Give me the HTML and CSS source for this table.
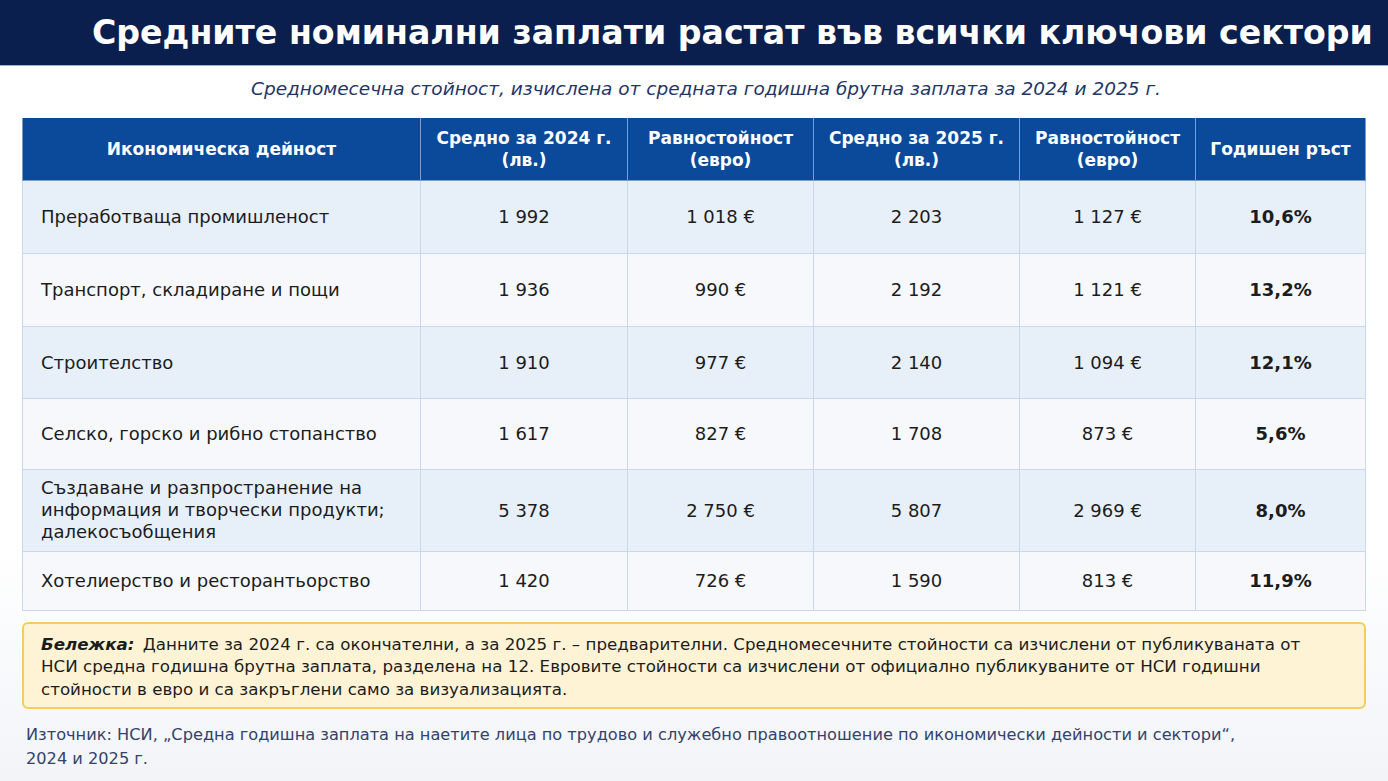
FILE: index.html
```html
<!DOCTYPE html>
<html lang="bg">
<head>
<meta charset="utf-8">
<link rel="stylesheet" href="styles.css">
</head>
<body>
<header class="top">
  <h1>Средните номинални заплати растат във всички ключови сектори</h1>
</header>
<p class="subtitle">Средномесечна стойност, изчислена от средната годишна брутна заплата за 2024 и 2025 г.</p>
<table class="data">
  <colgroup>
    <col class="c1"><col class="c2"><col class="c3"><col class="c4"><col class="c5"><col class="c6">
  </colgroup>
  <thead>
    <tr>
      <th>Икономическа дейност</th>
      <th>Средно за 2024 г.<br>(лв.)</th>
      <th>Равностойност<br>(евро)</th>
      <th>Средно за 2025 г.<br>(лв.)</th>
      <th>Равностойност<br>(евро)</th>
      <th>Годишен ръст</th>
    </tr>
  </thead>
  <tbody>
    <tr class="odd r1"><td>Преработваща промишленост</td><td>1 992</td><td>1 018 €</td><td>2 203</td><td>1 127 €</td><td class="g">10,6%</td></tr>
    <tr class="even r2"><td>Транспорт, складиране и пощи</td><td>1 936</td><td>990 €</td><td>2 192</td><td>1 121 €</td><td class="g">13,2%</td></tr>
    <tr class="odd r3"><td>Строителство</td><td>1 910</td><td>977 €</td><td>2 140</td><td>1 094 €</td><td class="g">12,1%</td></tr>
    <tr class="even r4"><td>Селско, горско и рибно стопанство</td><td>1 617</td><td>827 €</td><td>1 708</td><td>873 €</td><td class="g">5,6%</td></tr>
    <tr class="odd r5"><td class="multi">Създаване и разпространение на информация и творчески продукти; далекосъобщения</td><td>5 378</td><td>2 750 €</td><td>5 807</td><td>2 969 €</td><td class="g">8,0%</td></tr>
    <tr class="even r6"><td>Хотелиерство и ресторантьорство</td><td>1 420</td><td>726 €</td><td>1 590</td><td>813 €</td><td class="g">11,9%</td></tr>
  </tbody>
</table>
<div class="note">
  <p><span class="label">Бележка:</span> Данните за 2024 г. са окончателни, а за 2025 г. – предварителни. Средномесечните стойности са изчислени от публикуваната от НСИ средна годишна брутна заплата, разделена на 12. Евровите стойности са изчислени от официално публикуваните от НСИ годишни стойности в евро и са закръглени само за визуализацията.</p>
</div>
<p class="source">Източник: НСИ, „Средна годишна заплата на наетите лица по трудово и служебно правоотношение по икономически дейности и сектори“,<br>2024 и 2025 г.</p>
</body>
</html>
```
FILE: styles.css
```css
html, body {
  margin: 0;
  padding: 0;
}
body {
  width: 1388px;
  height: 781px;
  overflow: hidden;
  font-family: "DejaVu Sans", "Noto Sans", sans-serif;
  background: linear-gradient(to bottom, #ffffff 0%, #ffffff 70%, #f2f4f8 100%);
  color: #1c1c1c;
}
.top {
  height: 66px;
  background: #0b1f4e;
  border-bottom: 1px solid #9fb0cc;
  box-sizing: border-box;
  display: flex;
  align-items: center;
  padding-left: 92px;
}
.top h1 {
  margin: 0;
  font-size: 33.2px;
  font-weight: bold;
  color: #ffffff;
  white-space: nowrap;
}
.subtitle {
  margin: 12px 0 0 0;
  height: 30px;
  text-align: center;
  padding-left: 24px;
  font-style: italic;
  font-size: 18.5px;
  color: #1f3566;
}
.data {
  margin: 10px 0 0 22px;
  width: 1344px;
  border-collapse: collapse;
  table-layout: fixed;
  font-size: 18px;
}
.c1 { width: 398px; }
.c2 { width: 207px; }
.c3 { width: 186px; }
.c4 { width: 206px; }
.c5 { width: 176px; }
.c6 { width: 170px; }
.data th {
  background: #0b4a9b;
  color: #ffffff;
  font-weight: bold;
  font-size: 17px;
  line-height: 22px;
  height: 62px;
  padding: 0 4px;
  box-sizing: border-box;
  border: 1px solid #7f9cc8;
  border-top: none;
  text-align: center;
}
.data td {
  border: 1px solid #c9d8ec;
  text-align: center;
  padding: 0 8px;
  color: #1c1c1c;
}
.data td:first-child {
  text-align: left;
  padding-left: 18px;
}
.data td.multi {
  line-height: 22px;
  padding-right: 4px;
}
.data td.g {
  font-weight: bold;
}
.odd td { background: #e7eff9; }
.even td { background: #f6f8fc; }
.r1 { height: 73px; }
.r2 { height: 73px; }
.r3 { height: 72px; }
.r4 { height: 71px; }
.r5 { height: 82px; }
.r6 { height: 59px; }
.note {
  margin: 11px 0 0 22px;
  width: 1344px;
  box-sizing: border-box;
  height: 87px;
  background: #fff3d6;
  border: 2px solid #f7cc5a;
  border-radius: 6px;
  padding: 9px 44px 9px 17px;
}
.note p {
  margin: 0;
  font-size: 16.7px;
  line-height: 22.5px;
  color: #1c1c1c;
}
.note .label {
  display: inline-block;
  font-weight: bold;
  font-style: italic;
  padding-right: 3px;
}
.source {
  margin: 14px 0 0 26px;
  font-size: 16.2px;
  line-height: 24px;
  color: #33426a;
}
```
